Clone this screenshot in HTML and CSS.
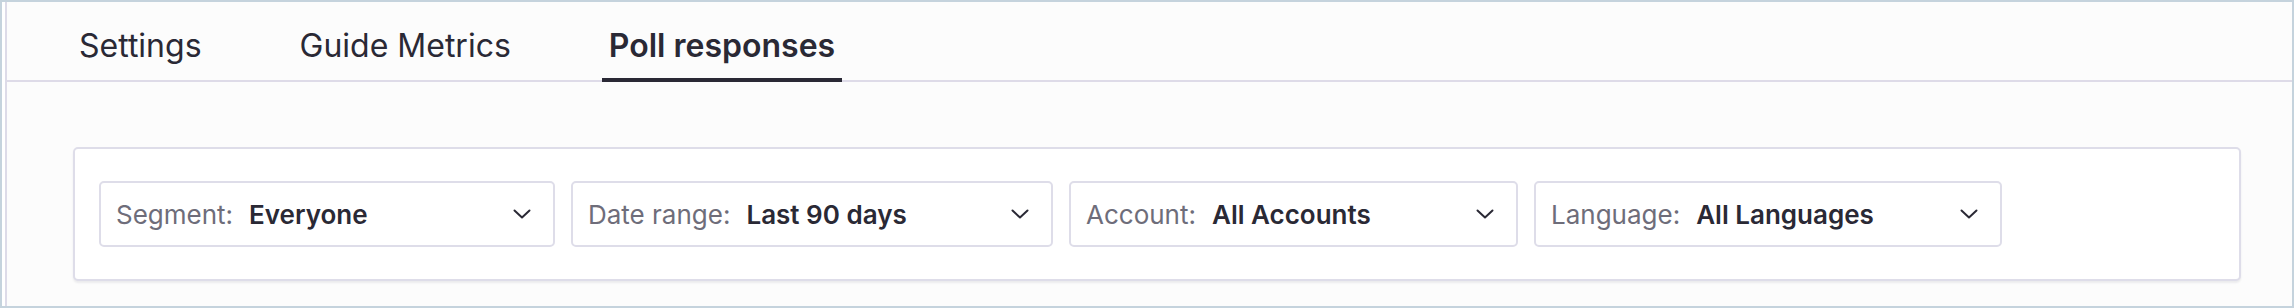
FILE: index.html
```html
<!DOCTYPE html>
<html>
<head>
<meta charset="utf-8">
<link rel="stylesheet" href="styles.css">
</head>
<body>
<div class="frame">
  <div class="panel">
    <nav class="tabs">
      <div class="tab">Settings</div>
      <div class="tab">Guide Metrics</div>
      <div class="tab active">Poll responses</div>
    </nav>
    <section class="card">
      <div class="select w-segment">
        <span class="label">Segment:</span><span class="value">Everyone</span>
        <svg class="chev" width="18" height="10" viewBox="0 0 18 10"><polyline points="1.5,1.5 9,8.5 16.5,1.5" fill="none" stroke="#2a2935" stroke-width="2" stroke-linecap="round" stroke-linejoin="round"/></svg>
      </div>
      <div class="select w-date">
        <span class="label">Date range:</span><span class="value">Last 90 days</span>
        <svg class="chev" width="18" height="10" viewBox="0 0 18 10"><polyline points="1.5,1.5 9,8.5 16.5,1.5" fill="none" stroke="#2a2935" stroke-width="2" stroke-linecap="round" stroke-linejoin="round"/></svg>
      </div>
      <div class="select w-account">
        <span class="label">Account:</span><span class="value">All Accounts</span>
        <svg class="chev" width="18" height="10" viewBox="0 0 18 10"><polyline points="1.5,1.5 9,8.5 16.5,1.5" fill="none" stroke="#2a2935" stroke-width="2" stroke-linecap="round" stroke-linejoin="round"/></svg>
      </div>
      <div class="select w-language">
        <span class="label">Language:</span><span class="value">All Languages</span>
        <svg class="chev" width="18" height="10" viewBox="0 0 18 10"><polyline points="1.5,1.5 9,8.5 16.5,1.5" fill="none" stroke="#2a2935" stroke-width="2" stroke-linecap="round" stroke-linejoin="round"/></svg>
      </div>
    </section>
  </div>
</div>
</body>
</html>
```

FILE: styles.css
```css
* { box-sizing: border-box; }
html, body { margin: 0; padding: 0; }
body {
  width: 2294px;
  height: 308px;
  overflow: hidden;
  font-family: Inter, "Noto Sans", sans-serif;
  color: #2a2935;
  background: #ffffff;
}
.frame {
  width: 2294px;
  height: 308px;
  border: 2px solid #c5d3dd;
  padding-left: 3px;
  background: #ffffff;
}
.panel {
  height: 100%;
  border-left: 2px solid #dddbe8;
  background: #fcfcfc;
  overflow: hidden;
}
.tabs {
  display: flex;
  height: 80px;
  border-bottom: 2px solid #dedbe8;
  padding-left: 65px;
  gap: 84px;
}
.tab {
  margin-bottom: -2px;
  padding: 24px 7px 0 7px;
  border-bottom: 4px solid transparent;
  font-size: 32px;
  line-height: 40px;
  font-weight: 400;
  color: #2a2935;
  white-space: nowrap;
}
.tab.active {
  font-weight: 600;
  border-bottom-color: #2a2935;
}
.card {
  display: flex;
  gap: 16px;
  margin: 65px 51px 0 66px;
  padding: 32px 24px;
  background: #ffffff;
  border: 2px solid #dedde9;
  border-radius: 5px;
  box-shadow: 0 2px 2px rgba(40, 40, 70, 0.08);
}
.select {
  display: flex;
  align-items: center;
  height: 66px;
  padding: 0 22px 0 15px;
  border: 2px solid #dedde9;
  border-radius: 5px;
  background: #ffffff;
  font-size: 26px;
  white-space: nowrap;
}
.label {
  color: #6e6d7a;
  margin-right: 16px;
}
.value {
  font-weight: 600;
  color: #2a2935;
}
.chev {
  margin-left: auto;
  flex: none;
}
.w-segment { width: 456px; }
.w-date { width: 482px; }
.w-account { width: 449px; }
.w-language { width: 468px; }
```
